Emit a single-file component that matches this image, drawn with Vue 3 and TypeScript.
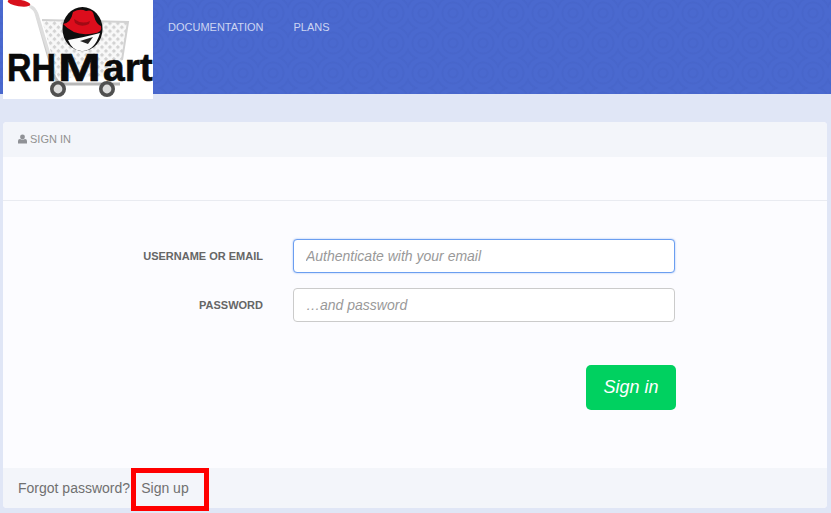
<script setup lang="ts">
const links: string[] = ['Documentation', 'Plans']
</script>

<template>
  <div class="page">
    <header class="topbar">
      <div class="logo" aria-label="RHMart">
        <svg class="cart" viewBox="0 0 150 99" width="150" height="99">
          <defs>
            <pattern id="mesh" width="5.6" height="5.6" patternUnits="userSpaceOnUse" patternTransform="rotate(45)">
              <rect width="5.6" height="5.6" fill="#f8f8f8" />
              <rect x="1" y="1" width="3" height="3" fill="#d2d2d2" />
            </pattern>
            <linearGradient id="rail" x1="0" y1="0" x2="0" y2="1">
              <stop offset="0" stop-color="#e4e4e4" />
              <stop offset="1" stop-color="#b8b8b8" />
            </linearGradient>
          </defs>
          <path d="M39 20 L125 22 L116 76 L55 78 Z" fill="url(#mesh)" />
          <path d="M39 20 L125 22 L119 60" fill="none" stroke="#d2d2d2" stroke-width="2" />
          <path d="M26 6 Q31 7 33 13 L50 72 Q53 84 62 84 L117 84" fill="none" stroke="url(#rail)" stroke-width="3" />
          <path d="M28 7 Q32 9 34 14 L52 74" fill="none" stroke="#dedede" stroke-width="3" />
          <ellipse cx="16" cy="3" rx="11.5" ry="3.3" transform="rotate(9 16 3)" fill="#d8101c" />
          <circle cx="55" cy="89" r="8" fill="#505050" />
          <circle cx="55" cy="89" r="4.4" fill="#dcdcdc" />
          <circle cx="104" cy="89" r="8" fill="#505050" />
          <circle cx="104" cy="89" r="4.4" fill="#dcdcdc" />
          <ellipse cx="79.5" cy="29" rx="20" ry="22" fill="#0e0e0e" />
          <path d="M65 40 Q70 52 80 51 Q92 50 97 33 Q78 38 65 40 Z" fill="#fbfbfb" />
          <path d="M60 24 Q68 23 70 12 Q77 8 83 11 Q90 9 91 16 Q93 24 98 26 Q100 33 90 33.5 Q72 37 60 24 Z" fill="#dc0d1c" />
          <path d="M71 19 Q79 25 87 21 L86 24 Q78 28 72 23 Z" fill="#a00a14" />
          <path d="M77 41 L90 37 L85 44 Z" fill="#222" />
        </svg>
        <span class="wordmark"><span class="wm-rh">RH</span><span class="wm-m">M</span><span class="wm-art">art</span></span>
      </div>
      <nav class="nav">
        <a v-for="link in links" :key="link" href="#" class="nav-link">{{ link }}</a>
      </nav>
    </header>

    <main class="panel">
      <div class="panel-head">
        <svg class="user-icon" viewBox="0 0 10 10" width="9" height="10">
          <circle cx="5" cy="2.8" r="2.7" fill="#8f9196" />
          <path d="M0 10 V7.2 Q0 5 2.2 4.9 Q5 6.6 7.8 4.9 Q10 5 10 7.2 V10 Z" fill="#8f9196" />
        </svg>
        <span>Sign in</span>
      </div>
      <div class="panel-gap"></div>
      <form class="panel-body" @submit.prevent>
        <div class="field first">
          <label for="u">Username or email</label>
          <input id="u" class="focused" type="text" placeholder="Authenticate with your email" />
        </div>
        <div class="field">
          <label for="p">Password</label>
          <input id="p" type="password" placeholder="…and password" />
        </div>
        <div class="actions">
          <button type="submit">Sign in</button>
        </div>
      </form>
      <footer class="panel-foot">
        <a href="#">Forgot password?</a>
        <span class="sep">|</span>
        <a href="#" class="signup">Sign up</a>
        <span class="highlight"></span>
      </footer>
    </main>
  </div>
</template>

<style>
html, body { margin: 0; background: #e0e6f6; }
</style>

<style scoped>
.page {
  height: 513px;
  overflow: hidden;
  background: #e0e6f6;
  font-family: "Liberation Sans", Arial, sans-serif;
}
.topbar {
  height: 94px;
  display: flex;
  padding-left: 3px;
  background-color: #4a69cf;
  background-image: repeating-radial-gradient(circle at 15px 15px, rgba(40, 60, 150, 0) 0 3px, rgba(40, 60, 150, 0.07) 4px 5px, rgba(40, 60, 150, 0) 6px);
  background-size: 30px 30px;
  background-position: -12px -2px;
}
.logo {
  position: relative;
  flex: none;
  width: 150px;
  height: 99px;
  background: #fff;
  overflow: hidden;
}
.cart { display: block; }
.wordmark {
  position: absolute;
  left: 4px;
  top: 46px;
  display: flex;
  font-size: 39px;
  line-height: 44px;
  font-weight: 700;
  color: #0a0a0a;
  white-space: nowrap;
  -webkit-text-stroke: 0.6px #0a0a0a;
}
.wm-rh {
  display: inline-block;
  width: 49px;
  transform: scaleX(0.87);
  transform-origin: left center;
}
.wm-m {
  display: inline-block;
  width: 45px;
  margin-left: 2px;
  transform: scaleX(1.32);
  transform-origin: left center;
}
.wm-art { display: inline-block; }
.nav {
  display: flex;
  gap: 30px;
  padding: 21px 0 0 15px;
}
.nav-link {
  font-size: 11px;
  line-height: 13px;
  text-transform: uppercase;
  text-decoration: none;
  color: #ccd5f2;
}
.panel {
  position: relative;
  margin: 28px 4px 0 3px;
  height: 386px;
  display: flex;
  flex-direction: column;
  background: #fcfcff;
  border-radius: 4px;
}
.panel-head {
  height: 33px;
  display: flex;
  align-items: center;
  gap: 3px;
  padding: 0 0 2px 15px;
  background: #f3f5fa;
  border-radius: 4px 4px 0 0;
  font-size: 11px;
  color: #919191;
  text-transform: uppercase;
}
.panel-gap {
  height: 43px;
  border-bottom: 1px solid #e9ebf1;
}
.panel-body {
  flex: 1;
  padding-top: 38px;
}
.field {
  display: flex;
  align-items: center;
  margin-bottom: 15px;
}
.field label {
  width: 260px;
  margin-right: 30px;
  text-align: right;
  font-size: 11px;
  font-weight: 700;
  text-transform: uppercase;
  color: #666;
}
.field input {
  width: 382px;
  height: 34px;
  box-sizing: border-box;
  padding: 0 12px;
  background: #fff;
  border: 1px solid #cbcbcb;
  border-radius: 4px;
  outline: none;
  font-family: inherit;
  font-size: 14px;
  color: #555;
}
.field input::placeholder {
  font-style: italic;
  color: #999;
  opacity: 1;
}
.field input.focused {
  border-color: #6b9ef0;
  box-shadow: 0 0 2px rgba(82, 140, 238, 0.6);
}
.actions {
  display: flex;
  justify-content: flex-end;
  width: 673px;
  padding-top: 28px;
}
.actions button {
  width: 90px;
  height: 45px;
  padding: 0;
  border: 0;
  border-radius: 5px;
  background: #00d160;
  color: #fff;
  font-family: inherit;
  font-size: 18px;
  font-style: italic;
}
.panel-foot {
  height: 40px;
  display: flex;
  align-items: center;
  padding-left: 15px;
  background: #f3f5fa;
  border-radius: 0 0 4px 4px;
  font-size: 14px;
  color: #707070;
}
.panel-foot a { color: #707070; text-decoration: none; }
.sep { margin: 0 4.5px 0 3px; }
.highlight {
  position: absolute;
  left: 128px;
  top: 346px;
  width: 68px;
  height: 33px;
  border: 5px solid #ff0000;
}
</style>
